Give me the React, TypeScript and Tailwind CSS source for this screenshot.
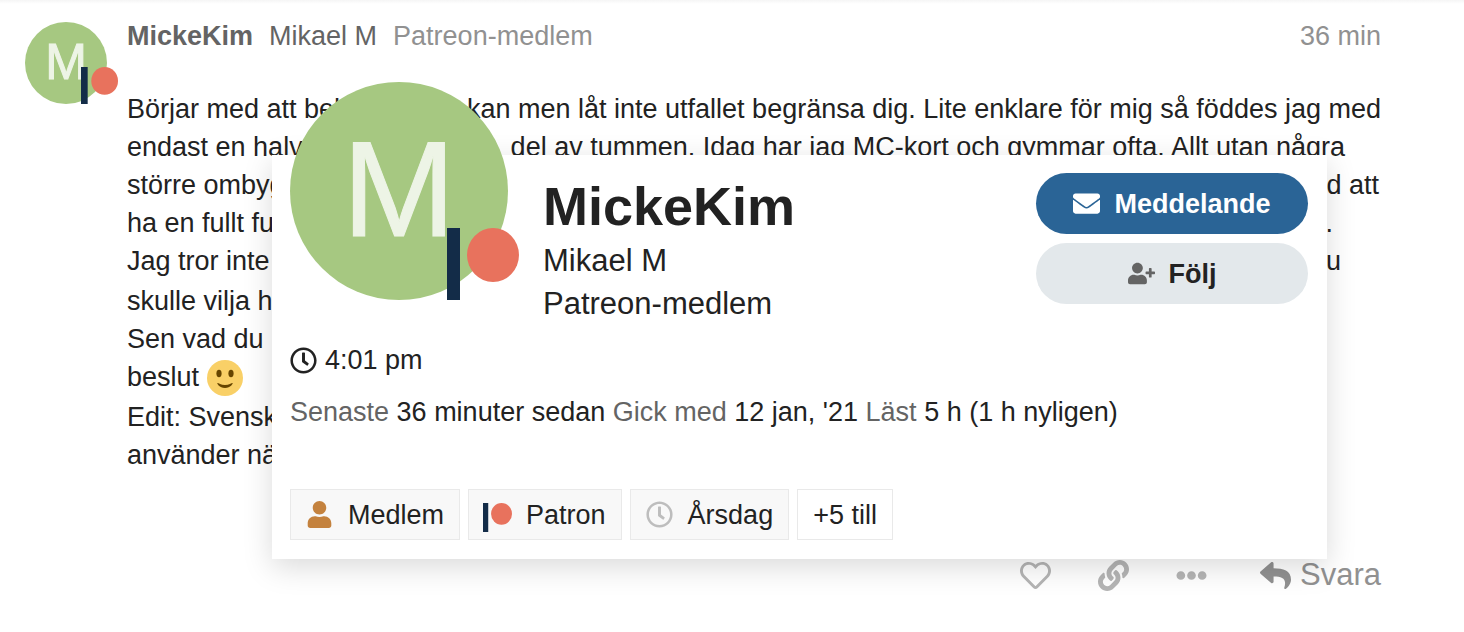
import type { ReactNode } from "react";
import { FaEllipsisH, FaEnvelope, FaLink, FaRegClock, FaRegHeart, FaReply, FaUser, FaUserPlus } from "react-icons/fa";

type Line = { start: string; end?: string; endClass?: string; emoji?: boolean };

// The card covers the middle of each line, so a line is kept as its two outer parts.
const PARAGRAPHS: Line[][] = [
  [
    { start: "Börjar med att beh", end: "kan men låt inte utfallet begränsa dig. Lite enklare för mig så föddes jag med" },
    { start: "endast en halv", end: "del av tummen. Idag har jag MC-kort och gymmar ofta. Allt utan några", endClass: "pr-9" },
    { start: "större ombyg", end: "d att", endClass: "pr-0.5" },
    { start: "ha en fullt fun", end: ".", endClass: "pr-12" },
    { start: "Jag tror inte", end: "u", endClass: "pr-10" },
  ],
  [{ start: "skulle vilja ha" }, { start: "Sen vad du" }, { start: "beslut", emoji: true }],
  [{ start: "Edit: Svenska" }, { start: "använder när" }],
];

const STATS = [
  { label: "Senaste", value: "36 minuter sedan" },
  { label: "Gick med", value: "12 jan, '21" },
  { label: "Läst", value: "5 h (1 h nyligen)" },
];

function PatreonMark({ className }: { className: string }) {
  return (
    <svg viewBox="0 0 72 72" className={className} aria-hidden="true">
      <rect width="13" height="72" fill="#132c48" />
      <ellipse cx="46" cy="27" rx="26" ry="27" fill="#e8725d" />
    </svg>
  );
}

function Smile() {
  return (
    <svg viewBox="0 0 36 36" className="size-9 shrink-0" role="img" aria-label="slightly smiling face">
      <circle cx="18" cy="18" r="18" fill="#f9d067" />
      <ellipse cx="12" cy="13.5" rx="2.6" ry="3.7" fill="#664500" />
      <ellipse cx="24" cy="13.5" rx="2.6" ry="3.7" fill="#664500" />
      <path d="M10.4 23c-.6.6 2 5 7.600 5s8.200-4.400 7.600-5c-.6-.6-3 2.100-7.600 2.100s-7-2.700-7.600-2.100z" fill="#664500" />
    </svg>
  );
}

function Badge({ icon, children }: { icon: ReactNode; children: ReactNode }) {
  return (
    <a href="#badge" className="flex h-[51px] items-center gap-[15px] border border-[#e9e9e9] bg-[#f8f8f8] px-[15px]">
      <span className="flex w-[27px] justify-center">{icon}</span>
      {children}
    </a>
  );
}

function UserCard() {
  return (
    <section
      aria-label="MickeKim"
      className="absolute top-[155px] right-[137px] left-[272px] z-10 bg-white px-[18px] pt-[18px] pb-[19px] shadow-[0_8px_28px_rgba(0,0,0,0.15)]"
    >
      <div className="flex items-start">
        <a
          href="#user"
          className="relative -mt-[91px] mr-[35px] flex size-[218px] shrink-0 items-center justify-center rounded-full bg-[#a6c881] pb-1 text-[136px] leading-none text-[#edf4e6] [-webkit-text-stroke:1px]"
        >
          M
          <PatreonMark className="absolute -right-[11px] bottom-0 size-[72px]" />
        </a>
        <div className="min-w-0 flex-1">
          <h1 className="text-[54px] leading-[66px] font-bold">MickeKim</h1>
          <p className="text-[31px] leading-[43px]">Mikael M</p>
          <p className="text-[31px] leading-[43px]">Patreon-medlem</p>
        </div>
        <div className="mr-px flex w-[272px] flex-col gap-[9px] font-bold">
          <button className="flex h-[61px] items-center justify-center gap-3.5 rounded-full bg-[#2a6496] text-white">
            <FaEnvelope className="size-[27px]" />
            Meddelande
          </button>
          <button className="flex h-[61px] items-center justify-center gap-3.5 rounded-full bg-[#e3e8eb]">
            <FaUserPlus className="size-[27px] text-[#646464]" />
            Följ
          </button>
        </div>
      </div>

      <div className="mt-4 flex items-center gap-2">
        <FaRegClock className="size-[27px]" />
        4:01 pm
      </div>

      <p className="mt-3.5">
        {STATS.map((s) => (
          <span key={s.label}>
            <span className="text-[#646464]">{s.label}</span> {s.value}{" "}
          </span>
        ))}
      </p>

      <div className="mt-[58px] flex gap-2">
        <Badge icon={<FaUser className="size-[27px] text-[#c4823e]" />}>Medlem</Badge>
        <Badge icon={<PatreonMark className="mt-1.5 size-[29px] shrink-0" />}>Patron</Badge>
        <Badge icon={<FaRegClock className="size-[27px] text-[#bdbdbd]" />}>Årsdag</Badge>
        <a href="#badges" className="flex h-[51px] items-center border border-[#e9e9e9] px-[15px]">
          +5 till
        </a>
      </div>
    </section>
  );
}

export default function App() {
  return (
    <main className="relative bg-white pb-9 font-['Liberation_Sans',Arial,sans-serif] text-[27px] leading-[38px] text-[#222222]">
      <div className="h-1 bg-linear-to-b from-[#f5f5f5] to-white" />
      <article className="flex gap-5 pt-[13px] pr-[83px] pl-[25px]">
        <a
          href="#user"
          className="relative mt-[5px] flex size-[82px] shrink-0 items-center justify-center rounded-full bg-[#a6c881] pb-0.5 text-[50px] leading-none text-[#edf4e6] [-webkit-text-stroke:1px]"
        >
          M
          <PatreonMark className="absolute -right-[11px] bottom-0 size-[37px]" />
        </a>

        <div className="min-w-0 flex-1">
          <header className="flex gap-4 text-[#646464]">
            <a href="#user" className="font-bold">
              MickeKim
            </a>
            <span>Mikael M</span>
            <span className="text-[#919191]">Patreon-medlem</span>
            <a href="#post" className="ml-auto text-[#919191]">
              36 min
            </a>
          </header>

          <div className="mt-[35px] flex flex-col gap-0.5 whitespace-nowrap">
            {PARAGRAPHS.map((lines, i) => (
              <div key={i}>
                {lines.map((line) => (
                  <div key={line.start} className="flex h-[38px] justify-between">
                    <span className="flex items-end gap-2">
                      {line.start}
                      {line.emoji && <Smile />}
                    </span>
                    {line.end && <span className={line.endClass}>{line.end}</span>}
                  </div>
                ))}
              </div>
            ))}
          </div>

          <div className="mt-[82px] flex items-center justify-end gap-[47px] text-[#b5b5b5]">
            <button aria-label="Gilla">
              <FaRegHeart className="size-[31px]" />
            </button>
            <button aria-label="Länk">
              <FaLink className="size-[31px]" />
            </button>
            <button aria-label="Visa mer">
              <FaEllipsisH className="size-[31px]" />
            </button>
            <button className="ml-1.5 flex items-center gap-[9px] text-[31px] text-[#919191]">
              <FaReply className="size-[31px]" />
              Svara
            </button>
          </div>
        </div>
      </article>
      <UserCard />
    </main>
  );
}
